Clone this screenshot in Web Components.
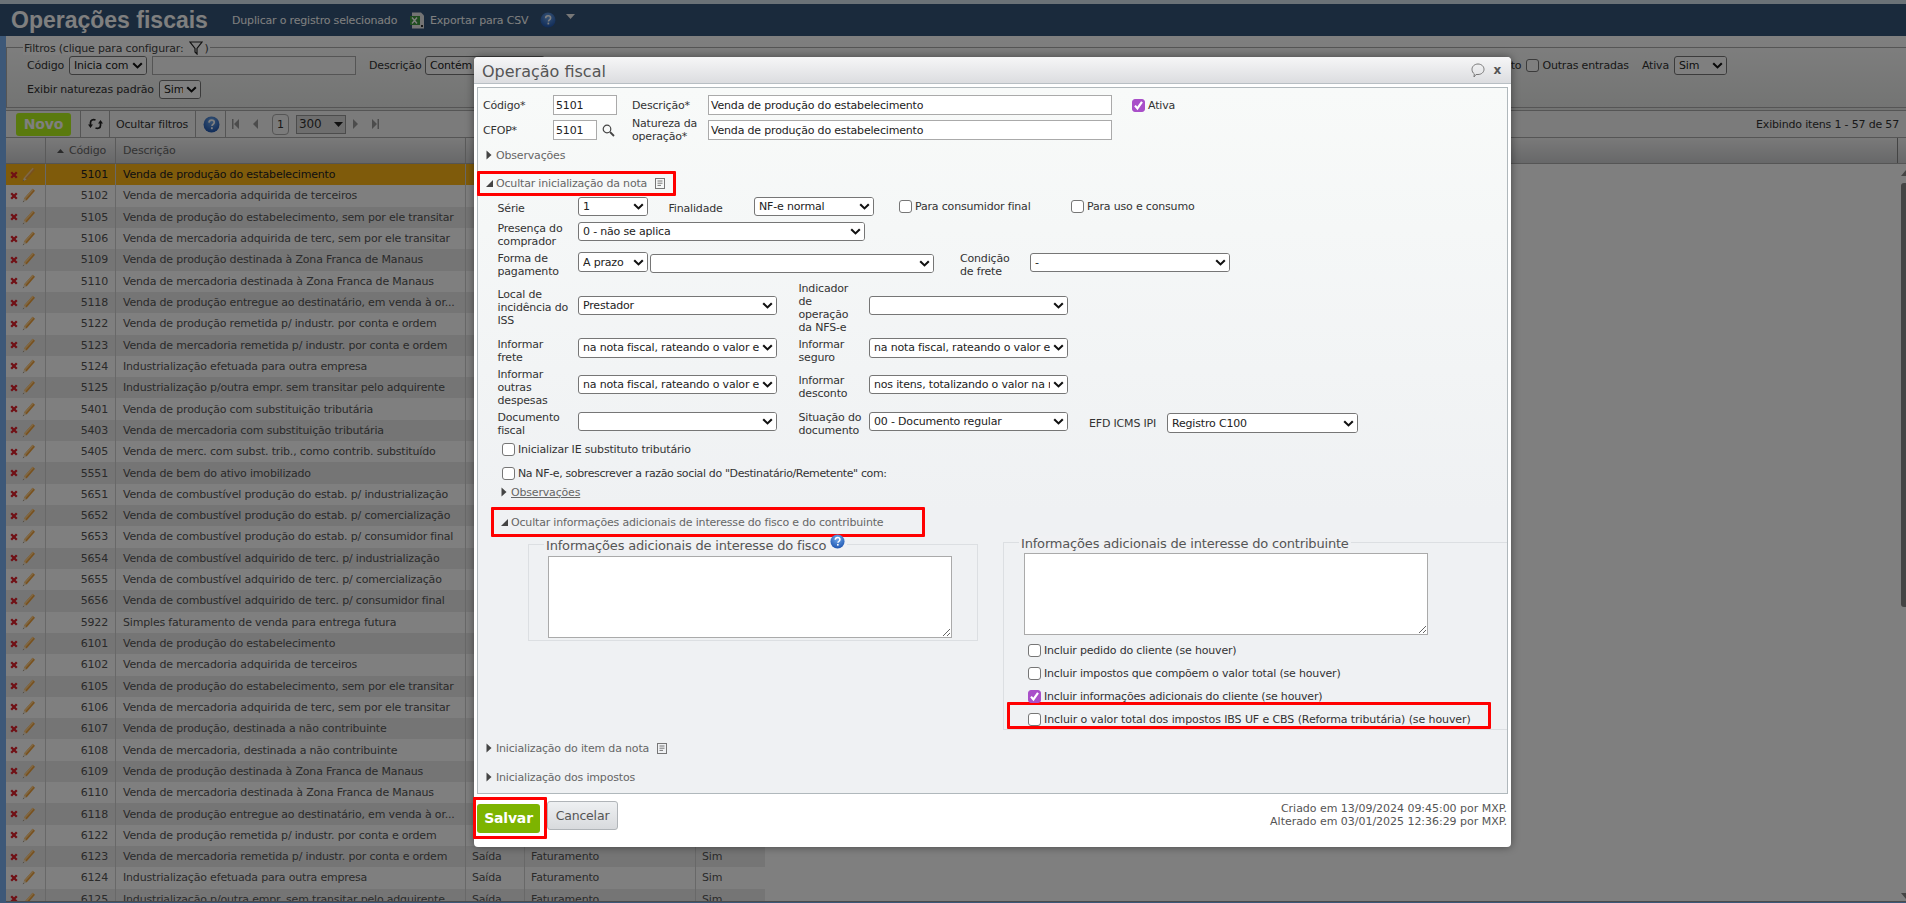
<!DOCTYPE html>
<html lang="pt">
<head>
<meta charset="utf-8">
<title>Operações fiscais</title>
<style>
html, body { margin: 0; height: 903px; overflow: hidden; background: #fff; }
body { font: 11px/13px "DejaVu Sans", sans-serif; letter-spacing: -.18px; color: #333; }
</style>
</head>
<body>
<list-page>
  <top-bar></top-bar>
  <filter-panel></filter-panel>
  <grid-toolbar></grid-toolbar>
  <natures-table></natures-table>
</list-page>
<modal-overlay>
  <fiscal-dialog heading="Operação fiscal">
    <operation-form></operation-form>
    <dialog-footer slot="footer"></dialog-footer>
  </fiscal-dialog>
</modal-overlay>

<script>
// icons shared by the components
const icons = {
  help: s => `<svg width="${s}" height="${s}" viewBox="0 0 16 16"><defs><radialGradient id="hg" cx="50%" cy="30%" r="70%"><stop offset="0" stop-color="#6fa8ec"/><stop offset="1" stop-color="#1f56b0"/></radialGradient></defs><circle cx="8" cy="8" r="7.5" fill="url(#hg)"/><path d="M5.6 6.2C5.7 4.6 6.7 3.8 8.1 3.8c1.5 0 2.5.9 2.5 2.1 0 1.1-.6 1.6-1.3 2.1-.6.4-.8.7-.8 1.4" fill="none" stroke="#fff" stroke-width="1.6"/><rect x="7.5" y="10.6" width="1.7" height="1.8" fill="#fff"/></svg>`,
  doc: `<svg width="10" height="11" viewBox="0 0 10 11"><rect x=".5" y=".5" width="9" height="10" fill="none" stroke="#777"/><path d="M2.5 3h5M2.5 5.2h5M2.5 7.4h3.5" stroke="#777"/></svg>`,
  chevron: `<svg width="11" height="7" viewBox="0 0 11 7"><path d="M1.2 1.2l4.3 4.2 4.3-4.2" fill="none" stroke="#111" stroke-width="2.1"/></svg>`,
  closed: `<svg width="6" height="10" viewBox="0 0 6 10"><path d="M.5 .5L5.5 5 .5 9.5z" fill="#444"/></svg>`,
  open: `<svg width="7" height="7" viewBox="0 0 7 7"><path d="M7 0V7H0z" fill="#444"/></svg>`,
  pencil: `<svg width="14" height="15" viewBox="0 0 14 15"><path d="M10.6 .8l2.4 2L4.6 12.6 2 10.4z" fill="#f0a23c"/><path d="M10.6 .8l1.2 1L3.2 11.5 2 10.4z" fill="#ffd08a"/><path d="M2 10.4l2.6 2.2L.8 14.2z" fill="#f3dfc0"/><path d="M.8 14.2l1-.4-.6-.5z" fill="#333"/></svg>`,
  cross: `<svg width="8" height="8" viewBox="0 0 8 8"><path d="M1.2 1.2l5.6 5.6M6.8 1.2L1.2 6.8" stroke="#e0202a" stroke-width="2.3"/></svg>`
};

class UiSelect extends HTMLElement {
  constructor() {
    super();
    this.attachShadow({ mode: 'open' }).innerHTML = `
    <style>
    :host { display: inline-flex; box-sizing: border-box; height: 19px; flex: none; align-items: center; position: relative;
      background: #fff; border: 1px solid #767676; border-radius: 3px; padding-left: 4px; overflow: hidden; white-space: nowrap; color: #222; }
    .txt { overflow: hidden; flex: 1; }
    .arr { flex: none; width: 17px; height: 100%; display: flex; align-items: center; justify-content: center; background: #fff; }
    </style>
    <span class="txt"><slot></slot></span><span class="arr">${icons.chevron}</span>`;
  }
}
customElements.define('ui-select', UiSelect);

class UiField extends HTMLElement {
  constructor() {
    super();
    this.attachShadow({ mode: 'open' }).innerHTML = `
    <style>
    :host { display: inline-flex; align-items: center; box-sizing: border-box; flex: none; height: 20px; background: var(--field-bg, #fff);
      border: 1px solid #aaa; padding-left: 2px; color: #222; white-space: nowrap; overflow: hidden; }
    </style><slot></slot>`;
  }
}
customElements.define('ui-field', UiField);

class UiCheck extends HTMLElement {
  constructor() {
    super();
    const on = this.hasAttribute('checked');
    this.attachShadow({ mode: 'open' }).innerHTML = `
    <style>
    :host { display: inline-flex; align-items: center; height: 13px; white-space: nowrap; color: #333; flex: none; }
    .box { box-sizing: border-box; width: 13px; height: 13px; border-radius: 3px; border: 1px solid #767676; background: #fff; margin-right: 3px; flex: none; }
    .on { background: #a94fc9; border-color: #a94fc9; }
    svg { display: block; }
    </style>
    <span class="box ${on ? 'on' : ''}">${on ? '<svg width="11" height="11" viewBox="0 0 11 11"><path d="M2 5.6l2.4 2.8L9 1.8" fill="none" stroke="#fff" stroke-width="2.2"/></svg>' : ''}</span><slot></slot>`;
  }
}
customElements.define('ui-check', UiCheck);

class RedMark extends HTMLElement {
  constructor() {
    super();
    this.attachShadow({ mode: 'open' }).innerHTML = `
    <style>:host { display: block; box-sizing: border-box; border: 3px solid #f00; border-radius: 1px; }</style><slot></slot>`;
  }
}
customElements.define('red-mark', RedMark);

class FoldHead extends HTMLElement {
  constructor() {
    super();
    const open = this.hasAttribute('open');
    const doc = this.hasAttribute('doc');
    this.attachShadow({ mode: 'open' }).innerHTML = `
    <style>
    :host { display: flex; align-items: center; height: 100%; color: #666; white-space: nowrap; }
    .tri { width: 10px; flex: none; display: flex; align-items: center; }
    .doc { margin-left: 8px; display: flex; }
    </style>
    <span class="tri">${open ? icons.open : icons.closed}</span><slot></slot>${doc ? `<span class="doc">${icons.doc}</span>` : ''}`;
  }
}
customElements.define('fold-head', FoldHead);

class InfoBox extends HTMLElement {
  constructor() {
    super();
    this.attachShadow({ mode: 'open' }).innerHTML = `
    <style>
    :host { display: block; position: relative; box-sizing: border-box; border: 1px solid #dcdfe2; flex: none; }
    .lg { position: absolute; left: 15px; top: -7px; background: #f0f1f3; padding: 0 2px; font-size: 13px; line-height: 16px; color: #555; display: flex; white-space: nowrap; }
    </style>
    <div class="lg"><slot name="legend"></slot></div><slot></slot>`;
  }
}
customElements.define('info-box', InfoBox);

class ListPage extends HTMLElement {
  constructor() {
    super();
    this.attachShadow({ mode: 'open' }).innerHTML = `
    <style>
    :host { display: grid; grid-template-rows: 36px 74px 28px 1fr; height: 903px; padding-left: 6px; box-sizing: border-box; background: #7ab0f0; }
    </style><slot></slot>`;
  }
}
customElements.define('list-page', ListPage);

class TopBar extends HTMLElement {
  constructor() {
    super();
    this.attachShadow({ mode: 'open' }).innerHTML = `
    <style>
    :host { display: flex; align-items: center; box-sizing: border-box; background: #345478; border-top: 4px solid #d6e4ee; margin-left: -6px; padding-left: 11px; color: #fff; white-space: nowrap; }
    h1 { margin: 0; font: bold 23px/32px "Liberation Sans", sans-serif; letter-spacing: 0; width: 221px; flex: none; }
    .lnk { flex: none; }
    .a { width: 178px; }
    .xl { display: flex; width: 20px; }
    .b { width: 110px; }
    .h { display: flex; width: 26px; }
    svg { display: block; }
    </style>
    <h1>Operações fiscais</h1>
    <span class="lnk a">Duplicar o registro selecionado</span>
    <span class="xl"><svg width="15" height="17" viewBox="0 0 15 17"><path d="M2 .5h9l3 3v13H2z" fill="#e8e8e8"/><rect x="0" y="4" width="10" height="9" fill="#3f9a3f"/><path d="M2 5.5l5 6M7 5.5l-5 6" stroke="#fff" stroke-width="1.4"/><rect x="11" y="13" width="2" height="2" fill="#333"/></svg></span>
    <span class="lnk b">Exportar para CSV</span>
    <span class="h">${icons.help(16)}</span>
    <svg width="9" height="5" viewBox="0 0 9 5" style="margin-top:-7px"><path d="M0 0h9L4.5 5z" fill="#eee"/></svg>`;
  }
}
customElements.define('top-bar', TopBar);

class FilterPanel extends HTMLElement {
  constructor() {
    super();
    this.attachShadow({ mode: 'open' }).innerHTML = `
    <style>
    :host { display: block; box-sizing: border-box; padding-top: 11px; background: linear-gradient(#fff, #e6e8e6); white-space: nowrap; }
    .fs { position: relative; box-sizing: border-box; height: 61px; border: 1px solid #aaa; border-right: none; padding: 8px 0 0 20px; }
    .lg { position: absolute; left: 16px; top: -7px; display: flex; align-items: center; height: 14px; padding: 0 1px; background: #fefefe; color: #444; }
    .lg svg { margin: 0 2px 0 5px; }
    .row { display: flex; align-items: center; height: 19px; }
    .row + .row { margin-top: 5px; }
    .right { margin-left: auto; display: flex; align-items: center; padding-right: 179px; }
    </style>
    <div class="fs">
      <div class="lg">Filtros (clique para configurar:<svg width="14" height="14" viewBox="0 0 14 14"><path d="M1 1h12L8 7.5V13L6 11V7.5z" fill="none" stroke="#222" stroke-width="1.2"/></svg>)</div>
      <div class="row">
        <span style="width:42px">Código</span>
        <ui-select style="width:78px">Inicia com</ui-select>
        <ui-field style="width:204px;height:19px;margin-left:5px;--field-bg:#fbfbfb"></ui-field>
        <span style="margin-left:13px;width:56px">Descrição</span>
        <ui-select style="width:120px">Contém</ui-select>
        <span class="right">
          <span style="margin-right:5px">to</span>
          <ui-check>Outras entradas</ui-check>
          <span style="margin:0 5px 0 13px">Ativa</span>
          <ui-select style="width:53px">Sim</ui-select>
        </span>
      </div>
      <div class="row">
        <span style="width:132px">Exibir naturezas padrão</span>
        <ui-select style="width:42px">Sim</ui-select>
      </div>
    </div>`;
  }
}
customElements.define('filter-panel', FilterPanel);

class GridToolbar extends HTMLElement {
  constructor() {
    super();
    const tri = d => `<svg width="7" height="10" viewBox="0 0 7 10"><path d="${d}" fill="#999"/></svg>`;
    this.attachShadow({ mode: 'open' }).innerHTML = `
    <style>
    :host { display: flex; align-items: center; box-sizing: border-box; border-top: 1px solid #aaa; border-bottom: 1px solid #aaa; background: #f6f6f6; color: #333; white-space: nowrap; padding-left: 10px; }
    .novo { box-sizing: border-box; width: 55px; height: 23px; border-radius: 3px; background: #b4f41c; color: #fff; font: bold 14px/23px "DejaVu Sans", sans-serif; text-align: center; }
    .cell { display: flex; align-items: center; height: 26px; flex: none; border-left: 1px solid #aaa; }
    svg { display: block; }
    .page { box-sizing: border-box; width: 17px; height: 21px; border: 1px solid #aaa; border-radius: 4px; text-align: center; line-height: 19px; margin: 0 7px 0 13px; }
    .size { display: flex; align-items: center; justify-content: space-between; box-sizing: border-box; width: 50px; height: 19px; border: 1px solid #999; background: #dcdcdc; padding: 0 2px 0 2px; font-size: 12px; }
    </style>
    <span class="novo">Novo</span>
    <span class="cell" style="margin-left:9px;width:29px;padding-left:7px;box-sizing:border-box">
      <svg width="15" height="14" viewBox="0 0 15 14"><path d="M2.5 8V5.5C2.5 3 5 2 7.5 3M12.5 6V8.5C12.5 11 10 12 7.5 11" fill="none" stroke="#222" stroke-width="1.7"/><path d="M0 7.5h5L2.5 11zM10 6.5h5L12.5 3z" fill="#222"/></svg>
    </span>
    <span class="cell" style="width:86px;padding-left:6px;box-sizing:border-box">Ocultar filtros</span>
    <span class="cell" style="width:30px;padding-left:7px;box-sizing:border-box">${icons.help(17)}</span>
    <span class="cell" style="padding-left:6px">
      ${tri('M0 0h1.5v10H0zM7 0v10L2 5z')}
      <span style="width:13px"></span>${tri('M6 0v10L1 5z')}
      <span class="page">1</span>
      <span class="size">300<svg width="9" height="5" viewBox="0 0 9 5"><path d="M0 0h9L4.500 5z" fill="#222"/></svg></span>
      <span style="width:7px"></span>${tri('M0 0v10L5 5z')}
      <span style="width:12px"></span>${tri('M0 0v10L5 5zM5.5 0H7v10H5.500z')}
    </span>
    <span style="margin-left:auto;padding-right:7px">Exibindo itens 1 - 57 de 57</span>`;
  }
}
customElements.define('grid-toolbar', GridToolbar);

const naturezas = [
  ['5101', 'Venda de produção do estabelecimento'],
  ['5102', 'Venda de mercadoria adquirida de terceiros'],
  ['5105', 'Venda de produção do estabelecimento, sem por ele transitar'],
  ['5106', 'Venda de mercadoria adquirida de terc, sem por ele transitar'],
  ['5109', 'Venda de produção destinada à Zona Franca de Manaus'],
  ['5110', 'Venda de mercadoria destinada à Zona Franca de Manaus'],
  ['5118', 'Venda de produção entregue ao destinatário, em venda à or...'],
  ['5122', 'Venda de produção remetida p/ industr. por conta e ordem'],
  ['5123', 'Venda de mercadoria remetida p/ industr. por conta e ordem'],
  ['5124', 'Industrialização efetuada para outra empresa'],
  ['5125', 'Industrialização p/outra empr. sem transitar pelo adquirente'],
  ['5401', 'Venda de produção com substituição tributária'],
  ['5403', 'Venda de mercadoria com substituição tributária'],
  ['5405', 'Venda de merc. com subst. trib., como contrib. substituído'],
  ['5551', 'Venda de bem do ativo imobilizado'],
  ['5651', 'Venda de combustível produção do estab. p/ industrialização'],
  ['5652', 'Venda de combustível produção do estab. p/ comercialização'],
  ['5653', 'Venda de combustível produção do estab. p/ consumidor final'],
  ['5654', 'Venda de combustível adquirido de terc. p/ industrialização'],
  ['5655', 'Venda de combustível adquirido de terc. p/ comercialização'],
  ['5656', 'Venda de combustível adquirido de terc. p/ consumidor final'],
  ['5922', 'Simples faturamento de venda para entrega futura'],
  ['6101', 'Venda de produção do estabelecimento'],
  ['6102', 'Venda de mercadoria adquirida de terceiros'],
  ['6105', 'Venda de produção do estabelecimento, sem por ele transitar'],
  ['6106', 'Venda de mercadoria adquirida de terc, sem por ele transitar'],
  ['6107', 'Venda de produção, destinada a não contribuinte'],
  ['6108', 'Venda de mercadoria, destinada a não contribuinte'],
  ['6109', 'Venda de produção destinada à Zona Franca de Manaus'],
  ['6110', 'Venda de mercadoria destinada à Zona Franca de Manaus'],
  ['6118', 'Venda de produção entregue ao destinatário, em venda à or...'],
  ['6122', 'Venda de produção remetida p/ industr. por conta e ordem'],
  ['6123', 'Venda de mercadoria remetida p/ industr. por conta e ordem'],
  ['6124', 'Industrialização efetuada para outra empresa'],
  ['6125', 'Industrialização p/outra empr. sem transitar pelo adquirente']
];

class NaturesTable extends HTMLElement {
  constructor() {
    super();
    const rows = naturezas.map(([cod, desc], i) => {
      // the other columns only show below the dialog
      const extra = i >= 32 ? ['Saída', 'Faturamento', 'Sim'] : ['', '', ''];
      return `<div class="tr ${i === 0 ? 'sel' : ''} ${i % 2 ? '' : 'band'}">
        <span class="td act">${icons.cross}${icons.pencil}</span>
        <span class="td cod">${cod}</span>
        <span class="td">${desc}</span>
        <span class="td x">${extra[0]}</span><span class="td x">${extra[1]}</span><span class="td x">${extra[2]}</span>
      </div>`;
    }).join('');
    this.attachShadow({ mode: 'open' }).innerHTML = `
    <style>
    :host { display: block; position: relative; overflow: hidden; box-sizing: border-box; background: #fff; border-bottom: 1px solid #999; min-height: 0; color: #555; white-space: nowrap; margin-bottom: 1px; }
    .th { display: flex; height: 26px; box-sizing: border-box; border-bottom: 1px solid #aaa; background: linear-gradient(#f4f4f4, #cfd0d2); color: #666; }
    .th span { display: flex; align-items: center; box-sizing: border-box; border-right: 1px solid #b4b4b4; flex: none; padding-left: 7px; }
    .tr { display: grid; grid-template-columns: 40px 70px 350px 59px 171px 69px; width: 759px; height: 21.32px; background: #fff; }
    .band { background: #ebebeb; }
    .sel { background: #ffb716; color: #222; }
    .td { display: flex; align-items: center; box-sizing: border-box; border-right: 1px solid #d0d0d0; padding-left: 7px; overflow: hidden; }
    .act { padding-left: 4px; gap: 4px; }
    .cod { justify-content: flex-end; padding: 0 7px 0 0; }
    .x { padding-left: 6px; }
    .x:last-child { border-right: 0; }
    .up, .down, .thumb { position: absolute; right: 0; background: #888; }
    .up { top: 32px; width: 5px; height: 6px; clip-path: polygon(100% 0, 100% 100%, 0 100%); }
    .thumb { top: 45px; width: 5px; height: 424px; border-radius: 3px 0 0 3px; }
    .down { top: 755px; width: 5px; height: 6px; clip-path: polygon(0 0, 100% 0, 100% 100%); }
    </style>
    <div class="th">
      <span style="width:40px"></span>
      <span style="width:70px;padding:0"><svg width="7" height="4" viewBox="0 0 7 4" style="margin:0 5px 0 11px"><path d="M0 4h7L3.500 0z" fill="#555"/></svg>Código</span>
      <span style="width:350px">Descrição</span>
      <span style="flex:1;border-right:1px solid #888"></span>
      <span style="width:8px;border:0"></span>
    </div>
    ${rows}
    <i class="up"></i><i class="thumb"></i><i class="down"></i>`;
  }
}
customElements.define('natures-table', NaturesTable);

class ModalOverlay extends HTMLElement {
  constructor() {
    super();
    this.attachShadow({ mode: 'open' }).innerHTML = `
    <style>:host { display: block; position: absolute; inset: 0; background: rgba(0, 0, 0, .5); }</style><slot></slot>`;
  }
}
customElements.define('modal-overlay', ModalOverlay);

class FiscalDialog extends HTMLElement {
  constructor() {
    super();
    this.attachShadow({ mode: 'open' }).innerHTML = `
    <style>
    :host { display: block; position: absolute; left: 474px; top: 57px; width: 1037px; height: 790px; background: #fff; border-radius: 4px; box-shadow: 0 0 9px rgba(0, 0, 0, .45); color: #333; }
    .bar { display: flex; align-items: center; box-sizing: border-box; height: 27px; border-bottom: 1px solid #b8bfc4; border-radius: 4px 4px 0 0; background: linear-gradient(#f6f6f7, #dcdde0); padding: 0 10px 0 8px; }
    h2 { margin: 3px 0 0; font: 400 16px/26px "DejaVu Sans", sans-serif; letter-spacing: 0; color: #555; flex: 1; }
    .bar svg { display: block; margin-right: 8px; }
    .x { font: bold 12px/14px "DejaVu Sans", sans-serif; color: #555; }
    .body { box-sizing: border-box; margin: 3px 3px 0; height: 707px; border: 1px solid #b0b8bc; background: linear-gradient(#f8faf9, #eff1f3 60%); }
    </style>
    <div class="bar"><h2></h2>
      <svg width="14" height="15" viewBox="0 0 14 15"><path d="M7 1c3.300 0 6 2.300 6 5.300 0 3-2.700 5.200-6 5.200H5L3 14l.3-3.100C1.800 9.900 1 8.200 1 6.300 1 3.300 3.700 1 7 1z" fill="none" stroke="#777"/></svg>
      <span class="x">x</span></div>
    <div class="body"><slot></slot></div>
    <slot name="footer"></slot>`;
    this.shadowRoot.querySelector('h2').textContent = this.getAttribute('heading');
  }
}
customElements.define('fiscal-dialog', FiscalDialog);

class OperationForm extends HTMLElement {
  constructor() {
    super();
    this.attachShadow({ mode: 'open' }).innerHTML = `
    <style>
    :host { display: block; color: #333; }
    .row { display: flex; align-items: flex-start; }
    .sec { height: 20px; padding-left: 8px; }
    .lb { flex: none; line-height: 13px; }
    .lab1 { width: 80.5px; }
    .one { margin-top: 5px; }
    .ind { padding-left: 19.5px; }
    .top { display: grid; grid-template-columns: 70px 64px 15px 76px 404px 20px auto; grid-auto-rows: 20px; padding: 7px 0 0 5px; row-gap: 5px; align-items: center; }
    textarea { display: block; box-sizing: border-box; width: 404px; height: 82px; border: 1px solid #aaa; background: #fff; margin: 0; padding: 2px; font: inherit; outline: none; }
    .checks { display: flex; flex-direction: column; gap: 10px; margin: 8.5px 0 0 4px; }
    u { text-decoration: underline; }
    svg { display: block; }
    </style>

    <div class="top">
      <span class="lb">Código*</span><ui-field style="width:64px">5101</ui-field><span></span>
      <span class="lb">Descrição*</span><ui-field style="width:404px">Venda de produção do estabelecimento</ui-field><span></span>
      <ui-check checked>Ativa</ui-check>

      <span class="lb">CFOP*</span>
      <span style="display:flex;align-items:center;gap:5px"><ui-field style="width:44px">5101</ui-field>
        <svg width="13" height="13" viewBox="0 0 13 13"><circle cx="5" cy="5" r="3.800" fill="none" stroke="#444" stroke-width="1.200"/><path d="M8 8l4 4" stroke="#444" stroke-width="1.800"/></svg></span><span></span>
      <span class="lb">Natureza da<br>operação*</span><ui-field style="width:404px">Venda de produção do estabelecimento</ui-field><span></span><span></span>
    </div>

    <div class="sec" style="margin-top:5px"><fold-head>Observações</fold-head></div>

    <red-mark style="margin:6px 0 0 -1px;width:199px;height:25px;padding-left:6px"><fold-head open doc>Ocultar inicialização da nota</fold-head></red-mark>

    <div class="row ind" style="margin-top:1px;height:19px">
      <span class="lb lab1 one">Série</span>
      <ui-select style="width:70px">1</ui-select>
      <span class="lb one" style="margin-left:20.5px;width:85.5px">Finalidade</span>
      <ui-select style="width:120px">NF-e normal</ui-select>
      <ui-check style="margin:3px 0 0 25px;width:172px">Para consumidor final</ui-check>
      <ui-check style="margin-top:3px">Para uso e consumo</ui-check>
    </div>

    <div class="row ind" style="margin-top:6px;height:19px">
      <span class="lb lab1">Presença do<br>comprador</span>
      <ui-select style="width:287px">0 - não se aplica</ui-select>
    </div>

    <div class="row ind" style="margin-top:11px;height:20px">
      <span class="lb lab1" style="margin-top:-.5px">Forma de<br>pagamento</span>
      <ui-select style="width:70px;height:20px">A prazo</ui-select>
      <ui-select style="width:284px;margin:2px 0 0 2px"></ui-select>
      <span class="lb" style="margin-left:26px;width:70px">Condição<br>de frete</span>
      <ui-select style="width:200px;margin-top:1px">-</ui-select>
    </div>

    <div class="row ind" style="margin-top:9.5px;height:52px">
      <span class="lb lab1" style="margin-top:6px">Local de<br>incidência do<br>ISS</span>
      <ui-select style="width:199px;margin-top:14.5px">Prestador</ui-select>
      <span class="lb" style="margin-left:21.5px;width:70.5px">Indicador<br>de<br>operação<br>da NFS-e</span>
      <ui-select style="width:199px;margin-top:14.5px"></ui-select>
    </div>

    <div class="row ind" style="margin-top:4px;height:26px">
      <span class="lb lab1">Informar<br>frete</span>
      <ui-select style="width:199px;height:20px">na nota fiscal, rateando o valor e</ui-select>
      <span class="lb" style="margin-left:21.5px;width:70.5px">Informar<br>seguro</span>
      <ui-select style="width:199px;height:20px">na nota fiscal, rateando o valor e</ui-select>
    </div>

    <div class="row ind" style="margin-top:4px;height:39px">
      <span class="lb lab1">Informar<br>outras<br>despesas</span>
      <ui-select style="width:199px;margin-top:7.5px">na nota fiscal, rateando o valor e</ui-select>
      <span class="lb" style="margin:6px 0 0 21.5px;width:70.5px">Informar<br>desconto</span>
      <ui-select style="width:199px;margin-top:7.5px">nos itens, totalizando o valor na r</ui-select>
    </div>

    <div class="row ind" style="margin-top:4px;height:26px">
      <span class="lb lab1">Documento<br>fiscal</span>
      <ui-select style="width:199px;margin-top:1.5px"></ui-select>
      <span class="lb" style="margin-left:21.5px;width:70.5px">Situação do<br>documento</span>
      <ui-select style="width:199px;margin-top:1.5px">00 - Documento regular</ui-select>
      <span class="lb" style="margin:6px 0 0 21px;width:78px">EFD ICMS IPI</span>
      <ui-select style="width:191px;height:20px;margin-top:2.5px">Registro C100</ui-select>
    </div>

    <div class="row" style="margin:6.5px 0 0 24px"><ui-check>Inicializar IE substituto tributário</ui-check></div>
    <div class="row" style="margin:11px 0 0 24px"><ui-check style="letter-spacing:-.37px">Na NF-e, sobrescrever a razão social do "Destinatário/Remetente" com:</ui-check></div>
    <div style="margin:5px 0 0 23px;height:14px"><fold-head><u>Observações</u></fold-head></div>

    <red-mark style="margin:8px 0 0 13px;width:434px;height:30px;padding-left:7px"><fold-head open>Ocultar informações adicionais de interesse do fisco e do contribuinte</fold-head></red-mark>

    <div class="row" style="height:192px">
      <info-box style="margin:7px 0 0 50px;width:450px;height:97px;padding:11px 0 0 19px">
        <span slot="legend" style="display:flex">Informações adicionais de interesse do fisco<span style="margin:-4px 0 0 4px">${icons.help(15)}</span></span>
        <textarea></textarea>
      </info-box>
      <info-box style="margin:5px 0 0 25px;width:504px;height:188px;padding:10px 0 0 20px;border-right:0">
        <span slot="legend">Informações adicionais de interesse do contribuinte</span>
        <textarea></textarea>
        <div class="checks">
          <ui-check>Incluir pedido do cliente (se houver)</ui-check>
          <ui-check>Incluir impostos que compõem o valor total (se houver)</ui-check>
          <ui-check checked>Incluir informações adicionais do cliente (se houver)</ui-check>
        </div>
        <red-mark style="margin:-.5px 0 0 -17px;width:484px;height:27px;padding:7.500px 0 0 18px;letter-spacing:-.1px"><ui-check>Incluir o valor total dos impostos IBS UF e CBS (Reforma tributária) (se houver)</ui-check></red-mark>
      </info-box>
    </div>

    <div class="sec" style="margin-top:9px"><fold-head doc>Inicialização do item da nota</fold-head></div>
    <div class="sec" style="margin-top:9px"><fold-head>Inicialização dos impostos</fold-head></div>`;
  }
}
customElements.define('operation-form', OperationForm);

class DialogFooter extends HTMLElement {
  constructor() {
    super();
    this.attachShadow({ mode: 'open' }).innerHTML = `
    <style>
    :host { display: flex; align-items: flex-start; color: #555; }
    .btn { box-sizing: border-box; height: 29px; border-radius: 3px; display: flex; align-items: center; justify-content: center; }
    .save { width: 63px; background: #7db400; color: #fff; font: bold 14px/29px "DejaVu Sans", sans-serif; }
    .cancel { width: 71px; margin-top: 7px; border: 1px solid #b0b4b8; background: linear-gradient(#eef0f2, #d8dadd); font-size: 12.500px; color: #555; }
    .stamp { margin: 7.5px 4px 0 auto; text-align: right; line-height: 13px; letter-spacing: -.03px; }
    </style>
    <red-mark style="margin:3px 0 0 -1px;width:74px;height:42px;padding:4px 0 0 1px"><span class="btn save">Salvar</span></red-mark>
    <span class="btn cancel">Cancelar</span>
    <div class="stamp">Criado em 13/09/2024 09:45:00 por MXP.<br>Alterado em 03/01/2025 12:36:29 por MXP.</div>`;
  }
}
customElements.define('dialog-footer', DialogFooter);
</script>
</body>
</html>
